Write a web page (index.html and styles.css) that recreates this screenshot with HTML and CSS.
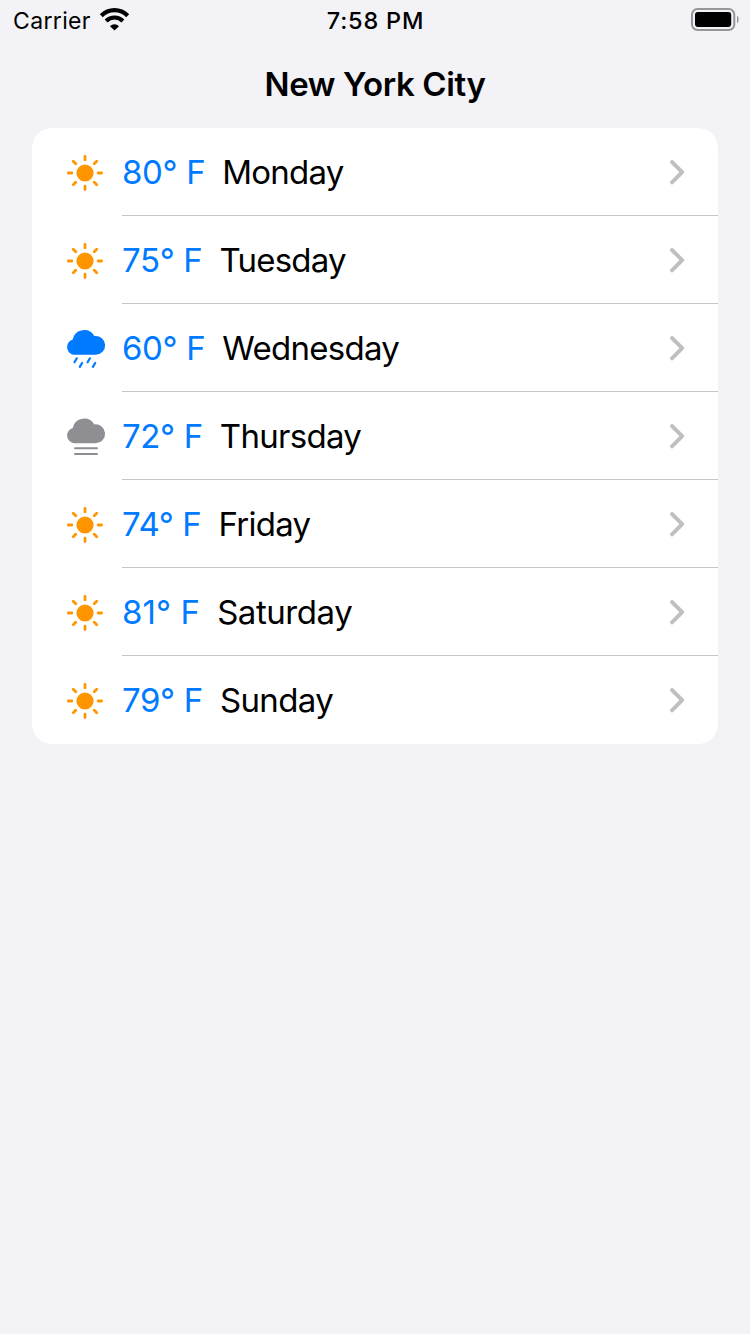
FILE: index.html
```html
<!DOCTYPE html>
<html lang="en">
<head>
<meta charset="utf-8">
<title>New York City</title>
<link rel="stylesheet" href="styles.css">
</head>
<body>
<svg width="0" height="0" class="defs">
  <symbol id="sun" viewBox="0 0 90 88">
    <circle cx="53" cy="45" r="8.6" fill="#ff9500"/>
    <path d="M53 28.4v3.4M53 58.2v3.4M36.4 45h3.4M66.2 45h3.4M41.3 33.3l2.4 2.4M62.3 54.3l2.4 2.4M64.7 33.3l-2.4 2.4M43.7 54.3l-2.4 2.4" stroke="#ff9500" stroke-width="2.8" stroke-linecap="round"/>
  </symbol>
  <symbol id="cloud" viewBox="0 0 60 60" overflow="visible">
    <path d="M19.8 39.8A7.75 7.75 0 0 1 17.7 24.6A11.7 11.7 0 0 1 39.3 21A9.45 9.45 0 1 1 40.6 39.8Z" fill="currentColor"/>
  </symbol>
  <symbol id="chevron" viewBox="0 0 20 28">
    <path d="M4 4L14.2 14.2L4 24.4" fill="none" stroke="#bfbfc0" stroke-width="3.9" stroke-linecap="round" stroke-linejoin="round"/>
  </symbol>
</svg>
<header class="status">
  <div class="carrier"><span>Carrier</span>
    <svg class="wifi" width="32" height="24" viewBox="0 0 32 24">
      <path d="M2.3 7.7A18.6 18.6 0 0 1 28.7 7.7" fill="none" stroke="#000" stroke-width="4.2"/>
      <path d="M7.1 13A11.8 11.8 0 0 1 23.9 13" fill="none" stroke="#000" stroke-width="4"/>
      <path d="M11 18.2A6.2 6.2 0 0 1 20 18.2L15.5 22.6Z"/>
    </svg>
  </div>
  <div class="time">7:58 PM</div>
  <svg class="battery" width="50" height="24" viewBox="0 0 50 24">
    <rect x="2" y="1.1" width="42.3" height="20.8" rx="5.4" fill="none" stroke="#97979a" stroke-width="2"/>
    <rect x="5" y="4.1" width="36.2" height="14.8" rx="2.8"/>
    <path d="M47 7.6C49.2 9 49.2 14 47 15.4Z" fill="#97979a"/>
  </svg>
</header>
<h1 class="title">New York City</h1>
<main class="card">
  <div class="row"><svg class="icon"><use href="#sun"/></svg><div class="body"><span class="temp">80° F</span><span class="day tight">Monday</span><svg class="chev"><use href="#chevron"/></svg></div></div>
  <div class="row"><svg class="icon"><use href="#sun"/></svg><div class="body"><span class="temp">75° F</span><span class="day tight">Tuesday</span><svg class="chev"><use href="#chevron"/></svg></div></div>
  <div class="row"><svg class="icon rain" viewBox="-23 -11 90 88"><use href="#cloud" width="60" height="60"/><path d="M21.8 43.3l-2.3 3.9M27.1 48l-2.3 3.9M34.9 43.3l-2.3 3.9M40.2 48l-2.3 3.9" stroke="currentColor" stroke-width="2.2" stroke-linecap="round"/></svg><div class="body"><span class="temp">60° F</span><span class="day mid">Wednesday</span><svg class="chev"><use href="#chevron"/></svg></div></div>
  <div class="row"><svg class="icon fog" viewBox="-23 -13 90 88"><use href="#cloud" y="-1.6" width="60" height="60"/><path d="M20 43.2h22M20 48.9h22" stroke="currentColor" stroke-width="2" stroke-linecap="round"/></svg><div class="body"><span class="temp">72° F</span><span class="day mid">Thursday</span><svg class="chev"><use href="#chevron"/></svg></div></div>
  <div class="row"><svg class="icon"><use href="#sun"/></svg><div class="body"><span class="temp">74° F</span><span class="day mid">Friday</span><svg class="chev"><use href="#chevron"/></svg></div></div>
  <div class="row"><svg class="icon"><use href="#sun"/></svg><div class="body"><span class="temp wide">81° F</span><span class="day loose">Saturday</span><svg class="chev"><use href="#chevron"/></svg></div></div>
  <div class="row"><svg class="icon"><use href="#sun"/></svg><div class="body"><span class="temp">79° F</span><span class="day">Sunday</span><svg class="chev"><use href="#chevron"/></svg></div></div>
</main>
</body>
</html>
```

FILE: styles.css
```css
* { box-sizing: border-box; }
body {
  margin: 0;
  min-height: 1334px;
  background: #f2f2f7;
  color: #000;
  font-family: Inter, "Liberation Sans", sans-serif;
}
svg { display: block; flex: none; }
.defs { position: absolute; }
.status {
  display: grid;
  grid-template-columns: 1fr auto 1fr;
  align-items: center;
  height: 40px;
  padding: 0 10px 0 13px;
  font-size: 23px;
  line-height: 38px;
}
.carrier { display: flex; align-items: center; gap: 8px; letter-spacing: 0.35px; }
.carrier span { padding-top: 2px; }
.time { padding: 2px 2px 0 0; font-size: 23.5px; font-weight: 500; letter-spacing: 0.8px; }
.battery { justify-self: end; margin-bottom: 1px; }
.title {
  margin: 0;
  height: 88px;
  line-height: 88px;
  font-size: 33px;
  font-weight: 600;
  letter-spacing: -0.38px;
  text-align: center;
}
.card {
  margin: 0 32px;
  background: #fff;
  border-radius: 20px;
  overflow: hidden;
}
.row { display: flex; height: 88px; }
.icon { width: 90px; height: 88px; }
.rain { color: #007aff; }
.fog { color: #8e8e93; }
.body {
  flex: 1;
  display: flex;
  align-items: center;
  padding-right: 30px;
  border-bottom: 1px solid #c6c6c8;
  font-size: 33px;
  letter-spacing: -0.6px;
}
.row:last-child .body { border-bottom-color: transparent; }
.temp { color: #007aff; margin-right: 17px; letter-spacing: -0.35px; }
.temp.wide { letter-spacing: 0.1px; }
.day.tight { letter-spacing: -0.8px; }
.day.mid { letter-spacing: -0.72px; }
.day.loose { letter-spacing: -0.45px; }
.chev { width: 20px; height: 28px; margin-left: auto; }
```
